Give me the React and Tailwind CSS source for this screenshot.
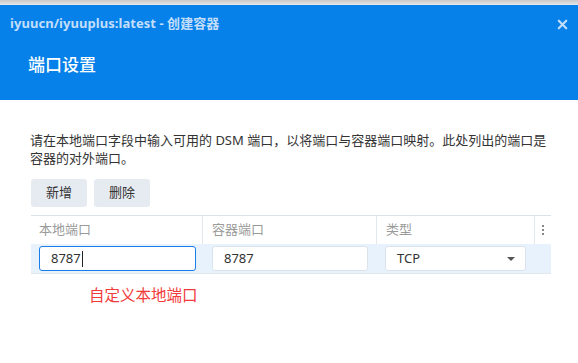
import { X } from 'lucide-react';

const font = { fontFamily: '"Noto Sans", "Noto Sans CJK SC", sans-serif' };

function Cell({ children, className = '' }) {
  return <div className={`flex items-center ${className}`}>{children}</div>;
}

export default function App() {
  return (
    <div className="w-[578px] h-[363px] bg-white overflow-hidden" style={font}>
      <div className="h-[5px] bg-gradient-to-b from-[#c8c8c8] to-[#e8e8e8]" />
      <div className="h-[95px] bg-[#0681ea] flex flex-col">
        <div className="h-[38px] flex items-center justify-between pl-[10px] pr-[8px]">
          <span className="text-[13px] font-bold text-[#c3defa] tracking-[0.05px]">
            iyuucn/iyuuplus:latest - 创建容器
          </span>
          <X className="w-[15px] h-[15px] text-[#c3defa]" strokeWidth={3.4} />
        </div>
        <div className="pl-[28px] pt-[13px] text-[17px] font-medium text-white leading-none">端口设置</div>
      </div>

      <div className="px-[31px] pt-[31px]">
        <p className="w-[524px] text-[13px] leading-[18px] text-[#333] -ml-[1px]">
          请在本地端口字段中输入可用的 DSM 端口，以将端口与容器端口映射。此处列出的端口是容器的对外端口。
        </p>
        <div className="flex gap-[7px] mt-[12px]">
          <button className="w-[56px] h-[28px] rounded-[3px] bg-[#e6ebf2] text-[13px] text-[#333]">新增</button>
          <button className="w-[56px] h-[28px] rounded-[3px] bg-[#e6ebf2] text-[13px] text-[#333]">删除</button>
        </div>

        <div className="mt-[8px] w-[520px] border-t border-[#d9e1ea]">
          <div className="grid grid-cols-[172px_174px_158px_16px] h-[28px] text-[13px] text-[#9a9a9a]">
            <Cell className="pl-[8px] border-r border-[#e3e8ee]">本地端口</Cell>
            <Cell className="pl-[9px] border-r border-[#e3e8ee]">容器端口</Cell>
            <Cell className="pl-[9px] border-r border-[#e3e8ee]">类型</Cell>
            <Cell className="justify-center">
              <div className="flex flex-col gap-[2px]">
                <span className="w-[2px] h-[2px] bg-[#888]" />
                <span className="w-[2px] h-[2px] bg-[#888]" />
                <span className="w-[2px] h-[2px] bg-[#888]" />
              </div>
            </Cell>
          </div>
          <div className="grid grid-cols-[172px_174px_158px_16px] h-[30px] bg-[#e8f2fd] border-b border-[#e3e8ee] text-[13px] text-[#333]">
            <Cell className="pl-[8px]">
              <div className="w-[157px] h-[25px] rounded-[3px] border border-[#1a7ee8] bg-white flex items-center pl-[11px]">
                8787<span className="w-px h-[16px] bg-[#222] ml-[1px]" />
              </div>
            </Cell>
            <Cell className="pl-[9px]">
              <div className="w-[156px] h-[25px] rounded-[3px] border border-[#dde3ea] bg-white flex items-center pl-[11px]">
                8787
              </div>
            </Cell>
            <Cell className="pl-[8px]">
              <div className="w-[141px] h-[25px] rounded-[3px] border border-[#dde3ea] bg-white flex items-center justify-between pl-[11px] pr-[10px]">
                <span>TCP</span>
                <span className="w-0 h-0 border-l-[4px] border-r-[4px] border-t-[4px] border-l-transparent border-r-transparent border-t-[#555]" />
              </div>
            </Cell>
            <div />
          </div>
        </div>

        <div className="pl-[58px] pt-[10px] text-[15.5px] text-[#f23a3a]">自定义本地端口</div>
      </div>
    </div>
  );
}
